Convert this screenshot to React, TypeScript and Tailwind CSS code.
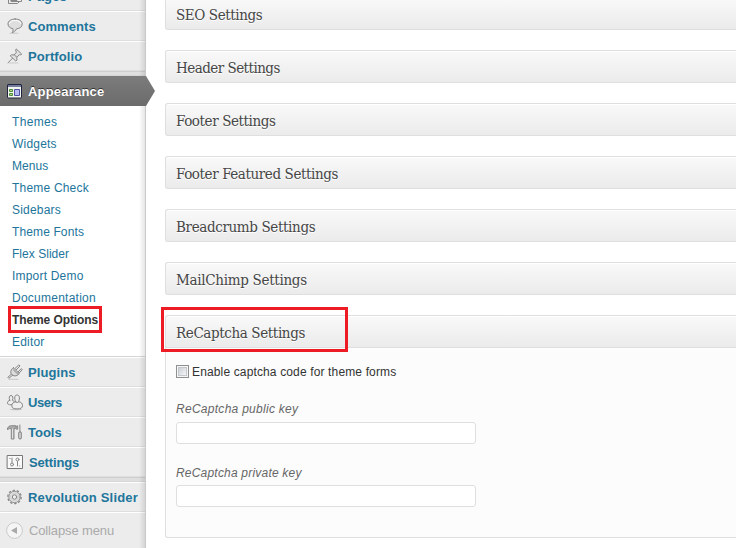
import type { ReactNode } from "react";

function Glyph({ children }: { children: ReactNode }) {
  return (
    <svg className="block h-[18px] w-[18px] shrink-0" viewBox="0 0 18 18" fill="none" stroke="#868686" strokeWidth="1" strokeLinecap="round" strokeLinejoin="round">
      {children}
    </svg>
  );
}

const icons = {
  pages: (
    <Glyph>
      <path d="M5.500 2.500h10v11h-10z" fill="#f4f4f4" />
      <path d="M2.500 6.500v9h9l2-2M5 12.500h6l3-3" />
    </Glyph>
  ),
  comments: (
    <Glyph>
      <ellipse cx="8" cy="16.300" rx="5" ry=".8" fill="#cfcfcf" stroke="none" />
      <path d="M9.200 2c4 0 7 1.900 7 4.900s-2.400 4.600-5.700 4.900c-.8 1.800-2.400 3.200-4.400 3.900.9-1.300 1.100-2.500.9-3.900C4 11.200 2 9.600 2 6.900 2 3.900 5.200 2 9.200 2z" fill="#dedede" />
      <path d="M3.500 6.500c.4-2 2.700-3 5.700-3s5.100 1 5.600 2.900" stroke="#fff" />
    </Glyph>
  ),
  portfolio: (
    <Glyph>
      <path d="M3 16h9" stroke="#ccc" />
      <path d="M10.500 2.200l5.200 4.800-1 1-1.300-.3-2.700 2.600.3 2.600-1.200 1.200-5.600-5.300 1.200-1 2.600.2 2.300-2.600-.5-1.900z" fill="#e0e0e0" />
      <path d="M6.600 11.200L2 15.700M8.500 8l2 2" />
    </Glyph>
  ),
  appearance: (
    <svg className="block h-[18px] w-[18px] shrink-0" viewBox="0 0 18 18">
      <rect x="1.500" y="2.500" width="14" height="13.500" rx=".5" fill="#f3f7ef" stroke="#20243d" />
      <path d="M2 3h13v2H2z" fill="#747d9d" />
      <path d="M3.500 7.500h3v2h-3zm0 4h3v2h-3z" fill="#b2dc84" stroke="#4f8a3f" />
      <path d="M8.500 7.500h5v6h-5z" fill="#b6b9f2" stroke="#4e51a1" />
    </svg>
  ),
  plugins: (
    <Glyph>
      <path d="M3 16.300h9" stroke="#c6c6c6" />
      <path d="M7.300 4.800l6 5.700c-1.500 2.300-4.800 3.300-7.300 1.400C3.700 9.800 4.800 6.200 7.300 4.800z" fill="#dcdcdc" />
      <path d="M9 5.500l3.800-3.600 1.200 1-3.700 3.900M12 9l3.300-3.400 1 1.100-3.200 3.400M5 11.500L1.800 14.300l1 1 3.700-3M7.500 7l4.200 4" />
    </Glyph>
  ),
  users: (
    <Glyph>
      <ellipse cx="10" cy="16.500" rx="6.500" ry=".7" fill="#c5c5c5" stroke="none" />
      <path d="M3.700 7.300C2.600 4.500 3.400 2.500 5 2.500s2.500 2 1.400 4.800c1.500.4 2.100 1.300 2.100 2.700 0 1.300-1.300 1.800-3.500 1.800S1.500 11.300 1.500 10c0-1.300.8-2.300 2.200-2.700z" fill="#eee" />
      <path d="M9.700 8.700C8 5 8.500 2 11 2s3.200 3 1.500 6.700c2.700.4 4 1.700 4 4 0 2.200-1.700 3.200-5.300 3.200s-5.400-.8-5.400-3c0-2.400 1.600-3.800 3.900-4.200z" fill="#eee" />
      <path d="M9.700 9c.9.800 2 .8 2.800 0" />
    </Glyph>
  ),
  tools: (
    <Glyph>
      <path d="M1.500 5.700c.6-2.400 2-3 4.200-3h4v1.500l1-.3v-1h1v3.300h-1l-1-.6H8V16H5.300V5.600H3.700c-.9 0-1.300.3-1.800 1z" fill="#aaa" />
      <path d="M13.900 2v6M12.700 9.700c0-1.500 2.600-1.500 2.600 0v5.500c0 1.100-2.600 1.100-2.600 0z" fill="#aaa" />
      <path d="M6.600 6v9M14 10.500v4" stroke="#e8e8e8" />
    </Glyph>
  ),
  settings: (
    <Glyph>
      <path d="M1.500 2.500h15v13h-15z" fill="#f9f9f9" stroke="#777" strokeLinejoin="miter" />
      <circle cx="6" cy="11.500" r="1.500" />
      <path d="M6 5v4.500M3.800 5.500h.4" />
      <circle cx="11.500" cy="6.500" r="1.500" />
      <path d="M11.500 8.500V13M13.700 13h.1" />
    </Glyph>
  ),
  gear: (
    <Glyph>
      <circle cx="8.500" cy="9" r="6.700" strokeWidth="1.300" strokeDasharray="2.400 1.809" strokeLinecap="butt" />
      <circle cx="8.500" cy="9" r="5.700" fill="#e0e0e0" stroke="#929292" />
      <circle cx="8.500" cy="9" r="2.200" fill="#efefef" />
      <circle cx="8.500" cy="9" r="3.800" stroke="#cccccc" strokeDasharray="1 1.300" />
    </Glyph>
  ),
};

function MenuRow({ icon, label, type }: { icon: ReactNode; label: string; type: string }) {
  return (
    <div className="flex h-[30px] shrink-0 items-center border-t border-t-white border-b border-b-[#dedede] pl-[6px]">
      {icon}
      <span className={"ml-[4px] pt-[2px] text-[13px] leading-[18px] font-bold whitespace-nowrap text-[#21759b] " + type}>{label}</span>
    </div>
  );
}

function Separator() {
  return <div className="h-[5px] shrink-0 border-t border-b border-t-[#cfcfcf] border-b-[#d5d5d5] bg-[#dfdfdf]" />;
}

const submenu = [
  ["Themes", "tracking-[0.35px]"],
  ["Widgets", "tracking-[0.2px]"],
  ["Menus", "tracking-[0.05px]"],
  ["Theme Check", "tracking-[0.2px]"],
  ["Sidebars", "tracking-[0.2px]"],
  ["Theme Fonts", "tracking-[0.12px]"],
  ["Flex Slider", "tracking-[0.03px]"],
  ["Import Demo", "tracking-[0.2px]"],
  ["Documentation", "tracking-[0.25px]"],
  ["Theme Options", "tracking-[-0.1px]"],
  ["Editor", "tracking-[0.2px]"],
];

function Sidebar() {
  return (
    <aside className="relative flex h-[548px] w-[146px] shrink-0 flex-col border-r border-[#c9c9c9] bg-[#ececec]">
      <div className="flex h-[11px] shrink-0 items-end overflow-hidden border-b border-[#dedede] pb-px pl-[6px]">
        <div className="flex h-[24px] items-center">
          {icons.pages}
          <span className="ml-[4px] text-[13px] leading-[18px] font-bold tracking-[0.1px] text-[#21759b]">Pages</span>
        </div>
      </div>
      <MenuRow icon={icons.comments} label="Comments" type="tracking-[0.07px]" />
      <MenuRow icon={icons.portfolio} label="Portfolio" type="tracking-[0.08px]" />
      <Separator />
      <div className="relative z-10 flex h-[30px] w-[155px] shrink-0 items-center bg-linear-to-b from-[#7c7c7c] to-[#6b6b6b] pl-[6px] [clip-path:polygon(0_0,146px_0,155px_50%,146px_100%,0_100%)]">
        {icons.appearance}
        <span className="ml-[4px] pt-[2px] text-[13px] leading-[18px] font-bold tracking-[0.2px] text-white [text-shadow:0_-1px_0_#333]">Appearance</span>
      </div>
      <div className="flex h-[250px] shrink-0 flex-col bg-white pt-[5px] pl-[12px]">
        {submenu.map(([label, type]) => (
          <div key={label} className="h-[22px] shrink-0">
            {label === "Theme Options" ? (
              <span className={"relative block text-[12px] leading-[22px] font-bold whitespace-nowrap text-[#333] " + type}>
                {label}
                <span className="absolute -top-[3px] -left-[4px] h-[27px] w-[94px] border-[3px] border-[#ed1c24]" />
              </span>
            ) : (
              <span className={"block text-[12px] leading-[22px] whitespace-nowrap text-[#21759b] " + type}>{label}</span>
            )}
          </div>
        ))}
      </div>
      <div className="h-px shrink-0 bg-[#d5d5d5]" />
      <MenuRow icon={icons.plugins} label="Plugins" type="tracking-[0.07px]" />
      <MenuRow icon={icons.users} label="Users" type="tracking-[-0.45px]" />
      <MenuRow icon={icons.tools} label="Tools" type="tracking-[0px]" />
      <MenuRow icon={icons.settings} label="Settings" type="tracking-[-0.15px] pl-px" />
      <Separator />
      <MenuRow icon={icons.gear} label="Revolution Slider" type="tracking-[0.18px]" />
      <div className="flex h-[37px] items-center border-t border-white pl-[6px]">
        <svg className="h-[18px] w-[18px]" viewBox="0 0 18 18">
          <circle cx="8.500" cy="8.500" r="7.900" fill="#f5f5f5" stroke="#c9c9c9" />
          <path d="M5 8.500l6-3.500v7z" fill="#aaa" />
        </svg>
        <span className="ml-[5px] text-[13px] tracking-[-0.13px] text-[#aaa]">Collapse menu</span>
      </div>
      <div className="absolute inset-y-0 right-0 w-[6px] bg-linear-to-r from-transparent to-black/10" />
    </aside>
  );
}

const headings = [
  ["SEO Settings", "tracking-[-0.4px]"],
  ["Header Settings", "tracking-[-0.53px]"],
  ["Footer Settings", "tracking-[-0.4px]"],
  ["Footer Featured Settings", "tracking-[-0.4px]"],
  ["Breadcrumb Settings", "tracking-[-0.36px]"],
  ["MailChimp Settings", "tracking-[-0.3px]"],
];

const headingClass =
  "flex h-[33px] items-center border border-r-0 border-[#dfdfdf] bg-linear-to-b from-[#f9f9f9] to-[#ebebeb] pt-[3px] pl-[10px] font-['DejaVu_Serif_Condensed','DejaVu_Serif',serif] text-[15px] text-[#464646] [font-stretch:condensed] [box-shadow:inset_0_1px_0_white] [text-shadow:0_1px_0_white] ";

function KeyField({ label, type, inputClass }: { label: string; type: string; inputClass: string }) {
  return (
    <label className="block">
      <span className={"block text-[12px] leading-[16px] text-[#666] italic " + type}>{label}</span>
      <input className={"block h-[22px] w-[300px] rounded-[3px] border border-[#dfdfdf] bg-white px-1 text-[12px] " + inputClass} />
    </label>
  );
}

export default function App() {
  return (
    <div className="flex h-[548px] w-[736px] overflow-hidden bg-white font-['Liberation_Sans',Arial,sans-serif]">
      <Sidebar />
      <main className="-mt-[3px] min-w-0 flex-1 pl-[19px]">
        {headings.map(([label, type]) => (
          <section key={label} className="mb-[20px]">
            <h3 className={headingClass + "rounded-l-[3px] " + type}>{label}</h3>
          </section>
        ))}
        <section className="relative">
          <h3 className={headingClass + "rounded-tl-[3px] tracking-[-0.38px]"}>ReCaptcha Settings</h3>
          <div className="absolute -top-[8px] -left-[4px] h-[45px] w-[187px] border-[3px] border-[#ed1c24]" />
          <div className="h-[190px] rounded-bl-[3px] border-b border-l border-[#dfdfdf] bg-[#fcfcfc] pt-[15px] pl-[10px]">
            <div className="flex h-[16px] items-center">
              <span className="flex h-[13px] w-[13px] items-center justify-center border border-[#8e8f8f] bg-[#f6f6f6]">
                <span className="h-[9px] w-[9px] border border-[#c4c8cc] bg-linear-to-br from-[#cbcfd5] to-[#f6f6f6]" />
              </span>
              <span className="ml-[3px] pt-px text-[12px] tracking-[0.14px] text-[#333]">Enable captcha code for theme forms</span>
            </div>
            <div className="mt-[22px] flex flex-col gap-[21px]">
              <KeyField label="ReCaptcha public key" type="tracking-[0.28px]" inputClass="mt-[5px]" />
              <KeyField label="ReCaptcha private key" type="tracking-[0.2px]" inputClass="mt-[4px]" />
            </div>
          </div>
        </section>
      </main>
    </div>
  );
}
